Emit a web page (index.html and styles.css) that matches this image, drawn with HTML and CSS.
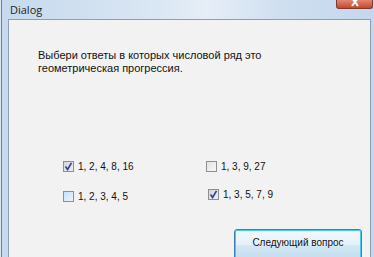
FILE: index.html
```html
<!DOCTYPE html>
<html lang="ru">
<head>
<meta charset="UTF-8">
<meta name="viewport" content="width=device-width, initial-scale=1.0">
<title>Dialog</title>
<link rel="stylesheet" href="styles.css">
</head>
<body>
<div class="window">
  <div class="titlebar">
    <span class="title">Dialog</span>
    <span class="close-btn">
      <svg width="10" height="8" viewBox="0 0 10 8"><path d="M2 -2 L8 6 M8 -2 L2 6" stroke="#fff" stroke-width="2"/></svg>
    </span>
  </div>

  <div class="client">
    <p class="question">Выбери ответы в которых числовой ряд это<br>геометрическая прогрессия.</p>

    <!-- answer options -->
    <div class="options">
      <label class="option">
        <span class="box checked">
          <svg width="9" height="9" viewBox="0 0 9 9"><path d="M1.5 4.5 L3.6 7.5 L7.5 0.8" fill="none" stroke="#2b3f9e" stroke-width="1.6"/></svg>
        </span>
        1, 2, 4, 8, 16
      </label>
      <label class="option">
        <span class="box"></span>
        1, 3, 9, 27
      </label>
      <label class="option low">
        <span class="box hover"></span>
        1, 2, 3, 4, 5
      </label>
      <label class="option shifted">
        <span class="box checked">
          <svg width="9" height="9" viewBox="0 0 9 9"><path d="M1.5 4.5 L3.6 7.5 L7.5 0.8" fill="none" stroke="#2b3f9e" stroke-width="1.6"/></svg>
        </span>
        1, 3, 5, 7, 9
      </label>
    </div>

    <div class="actions">
      <button class="next-btn">Следующий вопрос</button>
    </div>
  </div>
</div>
</body>
</html>
```

FILE: styles.css
```css
body {
  margin: 0;
  width: 374px;
  height: 257px;
  overflow: hidden;
  background: #dbe7f4;
  font-family: Tahoma, "DejaVu Sans", sans-serif;
}

.window {
  margin-left: 1px;
  height: 257px;
  border-left: 1px solid #6f8197;
  display: flex;
  flex-direction: column;
  background: linear-gradient(90deg, #c6d9ee 0%, #d9e6f3 40%, #e6eef7 55%, #cfdff0 75%, #c4d7ec 100%);
}

.titlebar {
  height: 20px;
  padding-left: 8px;
  display: flex;
  justify-content: space-between;
  align-items: flex-start;
}

.title {
  font-family: "Open Sans", "DejaVu Sans", sans-serif;
  font-size: 11px;
  line-height: 19px;
  color: #1e1e1e;
}

.close-btn {
  width: 35px;
  height: 8px;
  margin-right: 1px;
  background: linear-gradient(180deg, #e08872 0%, #c9462c 100%);
  border: 1px solid #7d3a2e;
  border-top: none;
  border-radius: 0 0 3px 3px;
  display: flex;
  justify-content: center;
}

.client {
  flex: 1;
  margin-left: 6px;
  margin-right: 3px;
  border: 1px solid #8d9eb3;
  border-bottom: none;
  background: #f2f2f2;
  color: #111;
  font-family: "Liberation Sans", Arial, sans-serif;
  font-size: 11px;
}

.question {
  margin: 0;
  padding: 29px 0 0 29px;
  line-height: 13px;
}

.options {
  display: grid;
  grid-template-columns: 143px 143px;
  row-gap: 16px;
  padding: 85px 0 0 54px;
  font-size: 10px;
}

.option {
  display: flex;
  align-items: center;
  gap: 4px;
  height: 12px;
}

.option.low {
  margin-top: 2px;
}

.option.shifted {
  padding-left: 2px;
}

.box {
  width: 9px;
  height: 9px;
  border: 1px solid #8e8f8f;
  background: linear-gradient(135deg, #e4e4e4 0%, #f6f6f6 100%);
  display: flex;
  align-items: center;
  justify-content: center;
}

.box.checked {
  background: linear-gradient(135deg, #d6d6d6 0%, #eeeeee 100%);
}

.box.hover {
  border-color: #5d9cd0;
  background: linear-gradient(135deg, #c7e2f6 0%, #e9f4fc 100%);
}

.actions {
  display: flex;
  justify-content: flex-end;
  padding: 27px 8px 0 0;
}

.next-btn {
  width: 128px;
  height: 32px;
  border: 1px solid #3c7fb1;
  border-radius: 3px;
  box-shadow: inset 0 0 0 1px #48c8f5;
  background: linear-gradient(180deg, #f2f9fd 0%, #e3f1fa 50%, #d2e8f5 51%, #c3dcec 100%);
  font-family: "Liberation Sans", Arial, sans-serif;
  font-size: 10px;
  color: #111;
  padding: 0 0 6px;
}
```
